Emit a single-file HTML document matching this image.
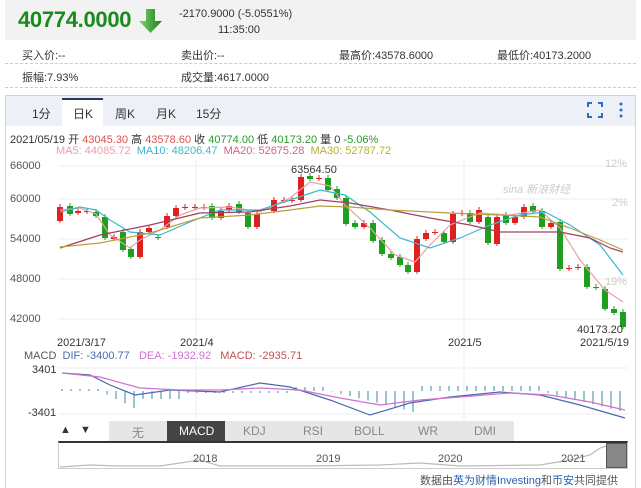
<!DOCTYPE html>
<html><head><meta charset="utf-8"><style>
*{margin:0;padding:0;box-sizing:border-box}
body{width:641px;height:488px;background:#fff;font-family:"Liberation Sans","Noto Sans CJK SC",sans-serif;overflow:hidden;position:relative;color:#333}
.a{position:absolute;white-space:nowrap}
</style></head><body>
<div class="a" style="left:5px;top:0;width:631px;height:40px;background:#f2f2f2"></div>
<div class="a" style="left:18px;top:7px;font-size:22px;font-weight:bold;color:#1a8a1a;letter-spacing:-0.3px">40774.0000</div>
<svg class="a" style="left:139px;top:8px" width="24" height="26"><defs><linearGradient id="g" x1="0" x2="1"><stop offset="0" stop-color="#7fd36a"/><stop offset="1" stop-color="#1d7f1d"/></linearGradient></defs><path d="M7 1h9v12h7L11.5 25 0 13h7z" fill="url(#g)"/></svg>
<div class="a" style="left:179px;top:8px;font-size:11px;color:#333">-2170.9000 (-5.0551%)</div>
<div class="a" style="left:218px;top:24px;font-size:11px;color:#333">11:35:00</div>
<div class="a" style="left:22px;top:47px;font-size:11px">买入价:--</div>
<div class="a" style="left:181px;top:47px;font-size:11px">卖出价:--</div>
<div class="a" style="left:339px;top:47px;font-size:11px">最高价:43578.6000</div>
<div class="a" style="left:497px;top:47px;font-size:11px">最低价:40173.2000</div>
<div class="a" style="left:5px;top:63px;width:631px;border-top:1px dashed #ccc"></div>
<div class="a" style="left:22px;top:69px;font-size:11px">振幅:7.93%</div>
<div class="a" style="left:181px;top:69px;font-size:11px">成交量:4617.0000</div>
<div class="a" style="left:5px;top:87px;width:631px;border-top:1px dashed #ccc"></div>
<div class="a" style="left:5px;top:95px;width:631px;height:393px;border:1px solid #cdd4de;border-bottom:none"></div>
<div class="a" style="left:6px;top:96px;width:629px;height:30px;background:#edf1f7"></div>
<div class="a" style="left:62px;top:98px;width:41px;height:28px;background:#fff;border-top:2px solid #2a3a5a"></div>
<div class="a" style="left:32px;top:105px;font-size:12px">1分</div>
<div class="a" style="left:73px;top:105px;font-size:12px">日K</div>
<div class="a" style="left:115px;top:105px;font-size:12px">周K</div>
<div class="a" style="left:156px;top:105px;font-size:12px">月K</div>
<div class="a" style="left:196px;top:105px;font-size:12px">15分</div>
<svg class="a" style="left:586px;top:101px" width="40" height="18"><path d="M2 6V2h4M12 2h4v4M16 12v4h-4M6 16H2v-4" stroke="#2a6fc0" stroke-width="2" fill="none"/><circle cx="35" cy="3" r="1.5" fill="#2a6fc0"/><circle cx="35" cy="9" r="1.5" fill="#2a6fc0"/><circle cx="35" cy="15" r="1.5" fill="#2a6fc0"/></svg>
<div class="a" style="left:10px;top:131px;font-size:11px">2021/05/19 开 <span style="color:#d9534f">43045.30</span> 高 <span style="color:#d9534f">43578.60</span> 收 <span style="color:#2a9a2a">40774.00</span> 低 <span style="color:#2a9a2a">40173.20</span> 量 0 <span style="color:#2a9a2a">-5.06%</span></div>
<div class="a" style="left:56px;top:145px;font-size:11px"><span style="color:#e8a0a8">MA5: 44085.72</span>&nbsp; <span style="color:#3ab8d0">MA10: 48206.47</span>&nbsp; <span style="color:#d86080">MA20: 52675.28</span>&nbsp; <span style="color:#b8b030">MA30: 52787.72</span></div>
<svg id="c" class="a" style="left:0;top:0" width="641" height="488"></svg>
<div class="a" style="left:109px;top:421px;width:405px;height:20px;background:#e6e6e6"></div>
<div class="a" style="left:167px;top:421px;width:58px;height:20px;background:#444"></div>
<div class="a" style="left:60px;top:424px;font-size:11px">▲&nbsp;&nbsp;&nbsp;▼</div>
<div class="a" style="left:132px;top:424px;font-size:12px;color:#888">无</div>
<div class="a" style="left:179px;top:424px;font-size:12px;color:#fff">MACD</div>
<div class="a" style="left:243px;top:424px;font-size:12px;color:#888">KDJ</div>
<div class="a" style="left:303px;top:424px;font-size:12px;color:#888">RSI</div>
<div class="a" style="left:354px;top:424px;font-size:12px;color:#888">BOLL</div>
<div class="a" style="left:418px;top:424px;font-size:12px;color:#888">WR</div>
<div class="a" style="left:474px;top:424px;font-size:12px;color:#888">DMI</div>
<div class="a" style="left:58px;top:441px;width:570px;height:28px;border:1px solid #ccc;border-top:2px solid #333"></div>
<div class="a" style="left:193px;top:453px;font-size:11px;color:#555">2018</div>
<div class="a" style="left:316px;top:453px;font-size:11px;color:#555">2019</div>
<div class="a" style="left:438px;top:453px;font-size:11px;color:#555">2020</div>
<div class="a" style="left:561px;top:453px;font-size:11px;color:#555">2021</div>
<div class="a" style="left:606px;top:443px;width:21px;height:25px;background:#888;border:1px solid #555"></div>
<div class="a" style="left:420px;top:472px;font-size:11px;color:#555">数据由<span style="color:#2a5fb0">英为财情Investing</span>和<span style="color:#2a5fb0">币安</span>共同提供</div>
<div class="a" style="left:10px;top:160px;font-size:11px;color:#555">66000</div>
<div class="a" style="left:10px;top:193px;font-size:11px;color:#555">60000</div>
<div class="a" style="left:10px;top:233px;font-size:11px;color:#555">54000</div>
<div class="a" style="left:10px;top:273px;font-size:11px;color:#555">48000</div>
<div class="a" style="left:10px;top:313px;font-size:11px;color:#555">42000</div>
<div class="a" style="left:605px;top:158px;font-size:11px;color:#ccc">12%</div>
<div class="a" style="left:612px;top:197px;font-size:11px;color:#ccc">2%</div>
<div class="a" style="left:605px;top:276px;font-size:11px;color:#ccc">19%</div>
<div class="a" style="left:291px;top:164px;font-size:11px;color:#333">63564.50</div>
<div class="a" style="left:577px;top:324px;font-size:11px;color:#333">40173.20</div>
<div class="a" style="left:503px;top:181px;font-size:11px;color:#ccc;font-style:italic">sina 新浪财经</div>
<div class="a" style="left:57px;top:337px;font-size:11px">2021/3/17</div>
<div class="a" style="left:180px;top:337px;font-size:11px">2021/4</div>
<div class="a" style="left:448px;top:337px;font-size:11px">2021/5</div>
<div class="a" style="left:580px;top:337px;font-size:11px">2021/5/19</div>
<div class="a" style="left:24px;top:350px;font-size:11px;color:#555">MACD&nbsp; <span style="color:#4a6ab0">DIF: -3400.77</span>&nbsp;&nbsp; <span style="color:#d070d0">DEA: -1932.92</span>&nbsp;&nbsp; <span style="color:#c05050">MACD: -2935.71</span></div>
<div class="a" style="left:32px;top:364px;font-size:11px;color:#333">3401</div>
<div class="a" style="left:28px;top:407px;font-size:11px;color:#333">-3401</div>
<script>
var s='',D=[[60,207,221,'r'],[70,206,214,'g'],[78,211,213,'r'],[87,211,212,'r'],[96,212,216,'g'],[105,217,238,'g'],[114,237,239,'r'],[123,232,250,'g'],[131,249,257,'g'],[140,232,257,'r'],[149,228,232,'r'],[158,237,238,'g'],[167,216,227,'r'],[176,208,216,'r'],[185,207,208,'r'],[195,207,208,'r'],[204,207,208,'r'],[212,206,218,'g'],[221,211,218,'r'],[229,206,210,'r'],[239,204,212,'g'],[248,213,227,'g'],[257,214,227,'r'],[274,200,211,'r'],[284,200,201,'r'],[292,200,201,'r'],[301,177,200,'r'],[310,176,179,'g'],[319,178,179,'r'],[328,178,190,'g'],[337,189,198,'g'],[346,198,224,'g'],[355,223,227,'g'],[364,223,227,'r'],[373,223,241,'g'],[382,240,254,'g'],[391,254,258,'g'],[400,257,265,'g'],[408,265,272,'g'],[417,239,272,'r'],[426,233,239,'r'],[435,232,233,'r'],[444,233,242,'g'],[453,214,242,'r'],[462,213,214,'r'],[470,213,222,'g'],[479,210,222,'r'],[488,217,243,'g'],[497,217,244,'r'],[506,215,223,'g'],[515,217,223,'r'],[524,207,217,'r'],[533,206,212,'g'],[542,211,227,'g'],[551,223,227,'r'],[560,222,269,'g'],[569,268,269,'r'],[578,267,268,'r'],[587,267,287,'g'],[596,287,288,'g'],[605,289,309,'g'],[614,309,313,'g'],[623,312,327,'g']];
s+='<g stroke="#eee">';[166,199,239,279,319,368,414].forEach(function(y){s+='<line x1="58" x2="628" y1="'+y+'" y2="'+y+'"/>'});[196,464].forEach(function(x){s+='<line x1="'+x+'" x2="'+x+'" y1="160" y2="420"/>'});s+='</g>';
D.forEach(function(d){var c=d[3]=='r'?'#e02020':'#1da01d';s+='<line x1="'+d[0]+'" x2="'+d[0]+'" y1="'+(d[1]-3)+'" y2="'+(d[2]+2)+'" stroke="'+c+'"/><rect x="'+(d[0]-3)+'" y="'+d[1]+'" width="6" height="'+Math.max(1,d[2]-d[1])+'" fill="'+c+'"/>'});
function pl(p,c){s+='<polyline fill="none" stroke="'+c+'" stroke-width="1.2" points="'+p+'"/>'}
pl('60,210 80,208 96,214 110,235 130,248 140,240 160,230 180,215 200,208 230,207 260,212 290,198 310,182 330,186 345,205 370,228 395,255 415,262 430,245 450,225 480,213 510,215 540,210 560,228 580,260 605,290 623,302','#e8a0a8');
pl('60,212 80,207 96,210 110,220 130,232 160,235 190,222 220,210 260,210 290,200 320,190 345,195 370,212 400,238 430,248 460,238 490,225 520,215 545,212 570,225 600,245 623,275','#3ab8d0');
pl('60,248 100,235 150,225 200,213 250,212 290,206 320,200 350,203 390,210 430,218 470,225 500,232 540,232 560,232 590,238 610,248 623,252','#a04060');
pl('60,247 100,243 150,233 200,218 250,215 290,210 320,206 350,207 390,210 430,212 470,214 500,215 540,217 570,228 600,240 623,250','#b8a040');
s+='<g stroke="#3a8aa0">';for(var x=62;x<=624;x+=9){var h=0;if(x<100)h=2;else if(x<140)h=-(x-100)/2;else if(x<180)h=-8;else if(x<290)h=-2;else if(x<330)h=4;else if(x<420)h=-(x-330)/4;else if(x<540)h=5;else h=-(x-540)/4;s+='<line x1="'+x+'" x2="'+x+'" y1="391" y2="'+(391-h)+'"/>'}s+='</g>';
pl('62,373 90,375 110,385 135,395 170,390 220,392 260,383 290,387 330,400 370,415 410,403 450,397 500,392 540,395 580,405 625,418','#4a6ab0');
pl('62,373 100,377 140,388 180,390 220,390 260,388 300,390 340,398 380,405 420,400 460,397 510,393 550,395 590,402 625,410','#d070d0');
pl('60,467 90,465 120,466 160,466 200,460 220,466 300,466 380,465 420,463 460,466 540,465 570,460 590,455 600,448 606,446','#bbb');
document.getElementById('c').innerHTML=s;
</script>
</body></html>
